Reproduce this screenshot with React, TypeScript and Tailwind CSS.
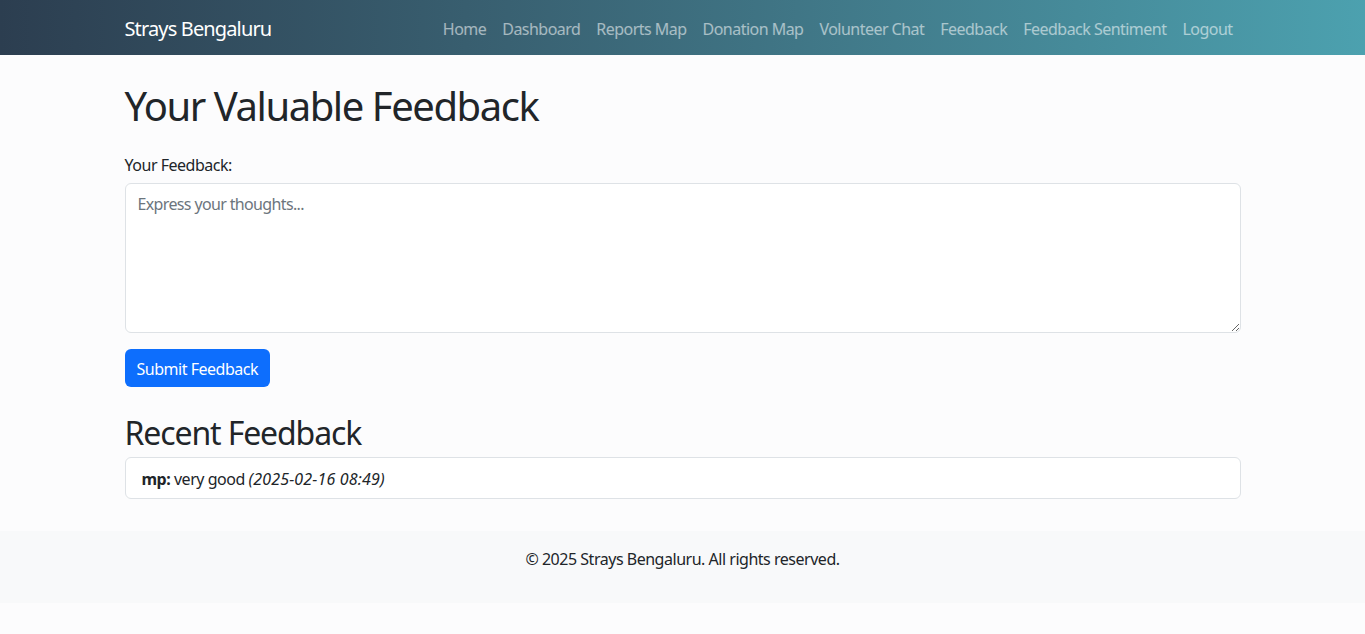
import React from "react";

const links = ["Home", "Dashboard", "Reports Map", "Donation Map", "Volunteer Chat", "Feedback", "Feedback Sentiment", "Logout"];

export default function App() {
  return (
    <div className="min-h-[634px] bg-[#fcfcfd] text-[#212529] font-['Noto_Sans',sans-serif] text-[16px] leading-[24px] tracking-[-0.03em]">
      <nav className="h-[55px] bg-gradient-to-r from-[#2c3e50] to-[#4ca1af]">
        <div className="mx-auto flex h-full w-[1140px] items-center justify-between px-[12px] pt-[2px]">
          <span className="text-[20px] leading-[30px] tracking-[-0.043em] text-white">Strays Bengaluru</span>
          <div className="flex">
            {links.map((l) => (
              <span key={l} className="px-[8px] tracking-[-0.033em] text-white/55">{l}</span>
            ))}
          </div>
        </div>
      </nav>
      <main className="mx-auto w-[1140px] px-[12px] pt-[27px]">
        <h1 className="mb-[23px] text-[40px] leading-[48px] tracking-[-0.036em]">Your Valuable Feedback</h1>
        <label className="mb-[6px] block">Your Feedback:</label>
        <textarea
          placeholder="Express your thoughts..."
          className="block h-[150px] w-full rounded-[6px] border border-[#dee2e6] bg-white px-[12px] pt-[8px] pb-[6px] tracking-[-0.04em] placeholder:text-[#6c757d] outline-none"
        />
        <button className="mt-[16px] h-[38px] rounded-[6px] bg-[#0d6efd] px-[12px] pt-[1px] text-white">Submit Feedback</button>
        <h2 className="mt-[27px] mb-[5px] text-[32px] leading-[38px] tracking-[-0.035em]">Recent Feedback</h2>
        <div className="rounded-[6px] border border-[#dee2e6] bg-white px-[16px] pt-[9px] pb-[7px]">
          <strong className="font-bold">mp:</strong> very good <em className="tracking-[0.01em]">(2025-02-16 08:49)</em>
        </div>
      </main>
      <footer className="mt-[32px] bg-[#f8f9fa] pt-[16px] pb-[32px] text-center">
        © 2025 Strays Bengaluru. All rights reserved.
      </footer>
    </div>
  );
}
